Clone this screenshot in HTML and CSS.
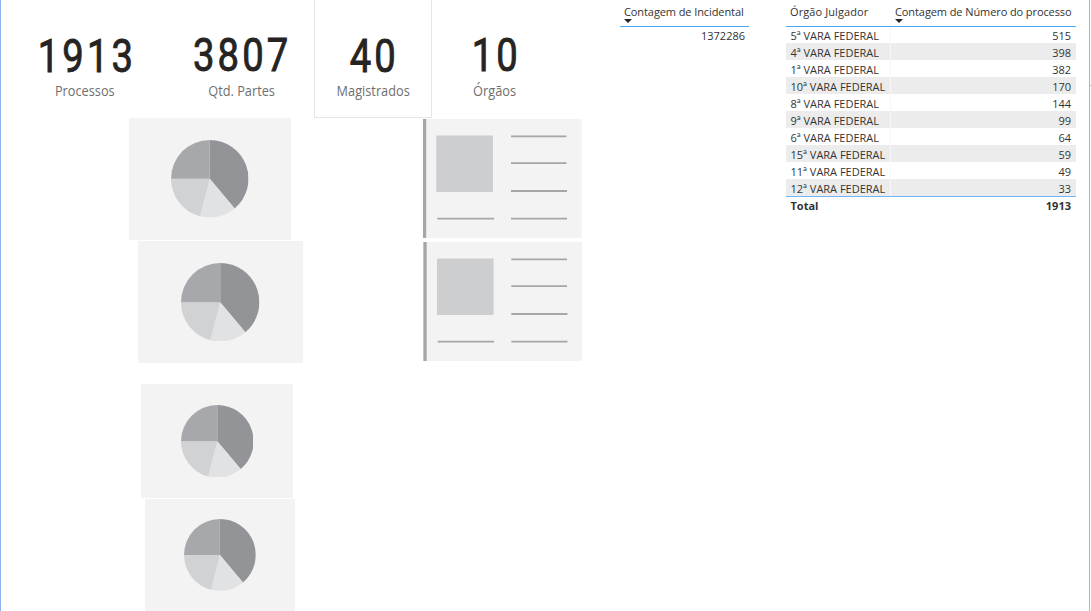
FILE: index.html
```html
<!DOCTYPE html>
<html lang="pt-BR">
<head>
<meta charset="utf-8">
<title>Painel de Processos</title>
<link rel="stylesheet" href="styles.css">
</head>
<body>
<svg class="defs" aria-hidden="true">
  <symbol id="pie" viewBox="-50 -50 100 100">
    <path fill="#939498" d="M0 0V-50A50 50 0 0 1 32.14 38.3Z"/>
    <path fill="#e1e2e4" d="M0 0L32.14 38.3A50 50 0 0 1 -12.43 48.43Z"/>
    <path fill="#d1d2d4" d="M0 0L-12.43 48.43A50 50 0 0 1 -50 0Z"/>
    <path fill="#a7a8ac" d="M0 0H-50A50 50 0 0 1 0 -50Z"/>
  </symbol>
</svg>
<main class="canvas">
  <section class="overview">
    <div class="kpis">
      <div class="kpi kpi-processos"><div class="value">1913</div><div class="label">Processos</div></div>
      <div class="kpi kpi-partes"><div class="value">3807</div><div class="label">Qtd. Partes</div></div>
      <div class="kpi kpi-magistrados"><div class="value">40</div><div class="label">Magistrados</div></div>
      <div class="kpi kpi-orgaos"><div class="value">10</div><div class="label">Órgãos</div></div>
    </div>
    <div class="placeholders">
      <div class="pies">
        <div class="pie-tile tile-a"><svg><use href="#pie"/></svg></div>
        <div class="pie-tile tile-b"><svg><use href="#pie"/></svg></div>
        <div class="pie-tile tile-c"><svg><use href="#pie"/></svg></div>
        <div class="pie-tile tile-d"><svg><use href="#pie"/></svg></div>
      </div>
      <div class="cards">
        <svg class="card" viewBox="0 0 159 119">
          <path fill="#f3f3f3" d="M0 0H158.7V119H0Z"/><path fill="#a6a6a6" d="M0 0H3.2V119H0Z"/>
          <path fill="#cdced0" d="M13.3 16.4H70V73H13.3Z"/>
          <path stroke="#a6a6a6" stroke-width="1.8" d="M88 17.4H143.4M88 44.2H143.4M88 72H144M88 99.7H144M14.3 99.7H71"/>
        </svg>
        <svg class="card" viewBox="0 0 159 119">
          <path fill="#f3f3f3" d="M0 0H159V119H0Z"/><path fill="#a6a6a6" d="M.4 0H3.7V119H.4Z"/>
          <path fill="#cdced0" d="M14 16.4H70.6V73H14Z"/>
          <path stroke="#a6a6a6" stroke-width="1.8" d="M88.3 17.4H144M88.3 44.2H144M88.3 72H144.5M88.3 99.7H144.5M14.7 99.7H71"/>
        </svg>
      </div>
    </div>
  </section>
  <table class="grid incidental">
    <thead><tr><th class="num"><span class="h-inc">Contagem de Incidental</span><i class="sort"></i></th></tr></thead>
    <tbody><tr><td class="num">1372286</td></tr></tbody>
  </table>
  <table class="grid orgaos">
    <colgroup><col class="c-name"><col class="c-count"></colgroup>
    <thead><tr><th><span class="h-org">Órgão Julgador</span></th><th class="num"><span class="h-num">Contagem de Número do processo</span><i class="sort"></i></th></tr></thead>
    <tbody>
      <tr><td>5ª VARA FEDERAL</td><td class="num">515</td></tr>
      <tr><td>4ª VARA FEDERAL</td><td class="num">398</td></tr>
      <tr><td>1ª VARA FEDERAL</td><td class="num">382</td></tr>
      <tr><td>10ª VARA FEDERAL</td><td class="num">170</td></tr>
      <tr><td>8ª VARA FEDERAL</td><td class="num">144</td></tr>
      <tr><td>9ª VARA FEDERAL</td><td class="num">99</td></tr>
      <tr><td>6ª VARA FEDERAL</td><td class="num">64</td></tr>
      <tr><td>15ª VARA FEDERAL</td><td class="num">59</td></tr>
      <tr><td>11ª VARA FEDERAL</td><td class="num">49</td></tr>
      <tr><td>12ª VARA FEDERAL</td><td class="num">33</td></tr>
    </tbody>
    <tfoot><tr><td>Total</td><td class="num">1913</td></tr></tfoot>
  </table>
  <div class="edge"></div>
  <div class="tick"></div>
</main>
</body>
</html>
```
FILE: styles.css
```css
* { box-sizing: border-box; }
body { margin: 0; background: #fff; font-family: "Open Sans", "Noto Sans", sans-serif; }
.defs { display: block; width: 0; height: 0; }
.canvas { display: flex; align-items: flex-start; width: 1091px; height: 611px; overflow: hidden; border-left: 1px solid #8cb2f2; }
.overview { width: 619px; flex: none; }

.kpis { display: flex; height: 118px; }
.kpi { display: flex; flex-direction: column; align-items: center; height: 118px; padding-top: 30px; flex: none; }
.kpi-processos { width: 168px; }
.kpi-partes { width: 145px; }
.kpi-magistrados { width: 118px; border: 1px solid #e6e6e6; border-top: 0; }
.kpi-orgaos { width: 126px; }
.value { height: 51px; line-height: 52px; padding-left: 4px; font-family: Roboto, sans-serif; font-size: 46px; font-weight: 400; color: #252423; -webkit-text-stroke: .9px #252423; letter-spacing: 3.8px; transform: scaleX(.83); }
.kpi-partes .value, .kpi-orgaos .value { line-height: 51px; }
.kpi-partes .value { padding-left: 2px; }
.label { height: 20px; line-height: 20px; font-size: 14px; font-weight: 400; color: #707070; white-space: nowrap; transform: scaleX(.91); }

.placeholders { display: flex; align-items: flex-start; }
.pies { width: 422px; flex: none; }
.pie-tile { display: flex; align-items: center; justify-content: center; background: #f3f3f3; }
.pie-tile svg { display: block; }
.tile-a { width: 162px; height: 122px; margin-left: 128px; }
.tile-a svg { width: 77.5px; height: 77.5px; }
.tile-b { width: 165px; height: 122px; margin: 1px 0 0 137px; }
.tile-b svg { width: 78.4px; height: 78.4px; }
.tile-c { width: 152px; height: 114px; margin: 21px 0 0 140px; }
.tile-c svg { width: 72.6px; height: 72.6px; }
.tile-d { width: 150px; height: 112px; margin: 1px 0 0 144px; }
.tile-d svg { width: 71.8px; height: 71.8px; }
.cards { display: flex; flex-direction: column; gap: 4px; padding-top: 1px; }
.card { display: block; width: 159px; height: 119px; }

.grid { border-collapse: separate; border-spacing: 0; table-layout: fixed; flex: none; color: #333; font-size: 11px; }
.incidental { width: 129px; margin-right: 37px; }
.orgaos { width: 290px; }
.c-name { width: 105px; }
.c-count { width: 185px; }
.grid th { position: relative; height: 27px; padding: 0 5px 0 4px; border-bottom: 1px solid #47a9f5; font-weight: 400; text-align: left; vertical-align: top; line-height: 24px; white-space: nowrap; }
.grid th span { display: block; }
.h-org { letter-spacing: .1px; }
.h-inc, .h-num { letter-spacing: -.09px; }
.sort { position: absolute; left: 4px; top: 19px; border: 4px solid transparent; border-top-color: #252423; border-bottom: 0; }
.grid td { height: 17px; padding: 2px 5px 0 4.5px; line-height: 15px; white-space: nowrap; }
.grid tbody tr:first-child td { height: 16px; line-height: 14px; }
.incidental td.num { padding-right: 4px; }
.grid .num { text-align: right; }
.grid th.num { text-align: left; }
.orgaos tbody tr:nth-child(even) td { background: #ececec; }
.orgaos tbody td:first-child { border-right: 1px solid #f7f7f7; }
.grid tfoot td { height: 18px; padding-top: 1px; line-height: 16px; border-top: 1px solid #71b5f2; font-weight: 700; }
.edge { width: 1px; height: 611px; margin-left: 13px; background: #b3b3b3; flex: none; }
.tick { width: 1px; height: 1px; margin-top: 85px; background: #b3b3b3; flex: none; }
```
